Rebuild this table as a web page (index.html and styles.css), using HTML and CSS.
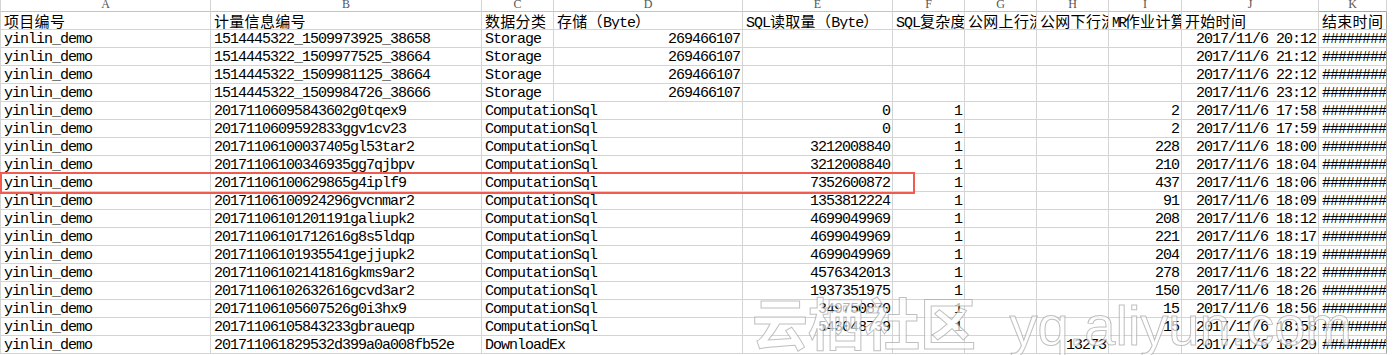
FILE: index.html
```html
<!DOCTYPE html>
<html lang="zh">
<head>
<meta charset="utf-8">
<title>计量数据</title>
<link rel="stylesheet" href="styles.css">
</head>
<body>
<div class="sheet">
  <div class="row letters">
    <div class="cell">A</div><div class="cell">B</div><div class="cell">C</div><div class="cell">D</div><div class="cell">E</div><div class="cell">F</div><div class="cell">G</div><div class="cell">H</div><div class="cell">I</div><div class="cell">J</div><div class="cell k">K</div>
  </div>
  <div class="row head">
    <div class="cell"><span class="zh">项目编号</span></div>
    <div class="cell"><span class="zh">计量信息编号</span></div>
    <div class="cell"><span class="zh">数据分类</span></div>
    <div class="cell"><span class="zh">存储（</span>Byte<span class="zh">）</span></div>
    <div class="cell">SQL<span class="zh">读取量（</span>Byte<span class="zh">）</span></div>
    <div class="cell">SQL<span class="zh">复杂度</span></div>
    <div class="cell"><span class="zh">公网上行流量</span></div>
    <div class="cell"><span class="zh">公网下行流量</span></div>
    <div class="cell"><span class="mr">MR</span><span class="zh">作业计算量</span></div>
    <div class="cell"><span class="zh">开始时间</span></div>
    <div class="cell k"><span class="zh">结束时间</span></div>
  </div>

  <div class="row"><div class="cell">yinlin_demo</div><div class="cell">1514445322_1509973925_38658</div><div class="cell">Storage</div><div class="cell n">269466107</div><div class="cell"></div><div class="cell"></div><div class="cell"></div><div class="cell"></div><div class="cell"></div><div class="cell n">2017/11/6 20:12</div><div class="cell k">########</div></div>
  <div class="row"><div class="cell">yinlin_demo</div><div class="cell">1514445322_1509977525_38664</div><div class="cell">Storage</div><div class="cell n">269466107</div><div class="cell"></div><div class="cell"></div><div class="cell"></div><div class="cell"></div><div class="cell"></div><div class="cell n">2017/11/6 21:12</div><div class="cell k">########</div></div>
  <div class="row"><div class="cell">yinlin_demo</div><div class="cell">1514445322_1509981125_38664</div><div class="cell">Storage</div><div class="cell n">269466107</div><div class="cell"></div><div class="cell"></div><div class="cell"></div><div class="cell"></div><div class="cell"></div><div class="cell n">2017/11/6 22:12</div><div class="cell k">########</div></div>
  <div class="row"><div class="cell">yinlin_demo</div><div class="cell">1514445322_1509984726_38666</div><div class="cell">Storage</div><div class="cell n">269466107</div><div class="cell"></div><div class="cell"></div><div class="cell"></div><div class="cell"></div><div class="cell"></div><div class="cell n">2017/11/6 23:12</div><div class="cell k">########</div></div>
  <div class="row"><div class="cell">yinlin_demo</div><div class="cell">20171106095843602g0tqex9</div><div class="cell wide">ComputationSql</div><div class="cell n">0</div><div class="cell n">1</div><div class="cell"></div><div class="cell"></div><div class="cell n">2</div><div class="cell n">2017/11/6 17:58</div><div class="cell k">########</div></div>
  <div class="row"><div class="cell">yinlin_demo</div><div class="cell">2017110609592833ggv1cv23</div><div class="cell wide">ComputationSql</div><div class="cell n">0</div><div class="cell n">1</div><div class="cell"></div><div class="cell"></div><div class="cell n">2</div><div class="cell n">2017/11/6 17:59</div><div class="cell k">########</div></div>
  <div class="row"><div class="cell">yinlin_demo</div><div class="cell">20171106100037405gl53tar2</div><div class="cell wide">ComputationSql</div><div class="cell n">3212008840</div><div class="cell n">1</div><div class="cell"></div><div class="cell"></div><div class="cell n">228</div><div class="cell n">2017/11/6 18:00</div><div class="cell k">########</div></div>
  <div class="row"><div class="cell">yinlin_demo</div><div class="cell">20171106100346935gg7qjbpv</div><div class="cell wide">ComputationSql</div><div class="cell n">3212008840</div><div class="cell n">1</div><div class="cell"></div><div class="cell"></div><div class="cell n">210</div><div class="cell n">2017/11/6 18:04</div><div class="cell k">########</div></div>
  <div class="row marked"><div class="cell">yinlin_demo</div><div class="cell">20171106100629865g4iplf9</div><div class="cell wide">ComputationSql</div><div class="cell n">7352600872</div><div class="cell n">1</div><div class="cell"></div><div class="cell"></div><div class="cell n">437</div><div class="cell n">2017/11/6 18:06</div><div class="cell k">########</div><span class="mark"></span></div>
  <div class="row"><div class="cell">yinlin_demo</div><div class="cell">20171106100924296gvcnmar2</div><div class="cell wide">ComputationSql</div><div class="cell n">1353812224</div><div class="cell n">1</div><div class="cell"></div><div class="cell"></div><div class="cell n">91</div><div class="cell n">2017/11/6 18:09</div><div class="cell k">########</div></div>
  <div class="row"><div class="cell">yinlin_demo</div><div class="cell">20171106101201191galiupk2</div><div class="cell wide">ComputationSql</div><div class="cell n">4699049969</div><div class="cell n">1</div><div class="cell"></div><div class="cell"></div><div class="cell n">208</div><div class="cell n">2017/11/6 18:12</div><div class="cell k">########</div></div>
  <div class="row"><div class="cell">yinlin_demo</div><div class="cell">20171106101712616g8s5ldqp</div><div class="cell wide">ComputationSql</div><div class="cell n">4699049969</div><div class="cell n">1</div><div class="cell"></div><div class="cell"></div><div class="cell n">221</div><div class="cell n">2017/11/6 18:17</div><div class="cell k">########</div></div>
  <div class="row"><div class="cell">yinlin_demo</div><div class="cell">20171106101935541gejjupk2</div><div class="cell wide">ComputationSql</div><div class="cell n">4699049969</div><div class="cell n">1</div><div class="cell"></div><div class="cell"></div><div class="cell n">204</div><div class="cell n">2017/11/6 18:19</div><div class="cell k">########</div></div>
  <div class="row"><div class="cell">yinlin_demo</div><div class="cell">20171106102141816gkms9ar2</div><div class="cell wide">ComputationSql</div><div class="cell n">4576342013</div><div class="cell n">1</div><div class="cell"></div><div class="cell"></div><div class="cell n">278</div><div class="cell n">2017/11/6 18:22</div><div class="cell k">########</div></div>
  <div class="row"><div class="cell">yinlin_demo</div><div class="cell">20171106102632616gcvd3ar2</div><div class="cell wide">ComputationSql</div><div class="cell n">1937351975</div><div class="cell n">1</div><div class="cell"></div><div class="cell"></div><div class="cell n">150</div><div class="cell n">2017/11/6 18:26</div><div class="cell k">########</div></div>
  <div class="row"><div class="cell">yinlin_demo</div><div class="cell">20171106105607526g0i3hx9</div><div class="cell wide">ComputationSql</div><div class="cell n">349750870</div><div class="cell n">1</div><div class="cell"></div><div class="cell"></div><div class="cell n">15</div><div class="cell n">2017/11/6 18:56</div><div class="cell k">########</div></div>
  <div class="row"><div class="cell">yinlin_demo</div><div class="cell">20171106105843233gbraueqp</div><div class="cell wide">ComputationSql</div><div class="cell n">543048739</div><div class="cell n">1</div><div class="cell"></div><div class="cell"></div><div class="cell n">15</div><div class="cell n">2017/11/6 18:58</div><div class="cell k">########</div></div>
  <div class="row"><div class="cell">yinlin_demo</div><div class="cell">201711061829532d399a0a008fb52e</div><div class="cell wide">DownloadEx</div><div class="cell"></div><div class="cell"></div><div class="cell"></div><div class="cell n">13273</div><div class="cell"></div><div class="cell n">2017/11/6 18:29</div><div class="cell k">########</div></div>
</div>
<div class="watermark"><span class="wm-zh">云栖社区</span> <span class="wm-en">yq.aliyun.com</span></div>
</body>
</html>
```

FILE: styles.css
```css
html, body {
  margin: 0;
  padding: 0;
  background: #ffffff;
}
body {
  position: relative;
  width: 1393px;
  height: 355px;
  overflow: hidden;
  font-family: "Liberation Mono", "Noto Sans CJK SC", monospace;
  font-size: 15px;
  letter-spacing: -1px;
  color: #000000;
}
.sheet {
  display: flex;
  flex-direction: column;
  width: 1387px;
}
.row {
  display: grid;
  grid-template-columns: 211px 271px 72px 189px 150px 72px 72px 72px 73px 137px 68px;
  height: 18px;
}
.cell {
  box-sizing: border-box;
  height: 18px;
  border-right: 1px solid #d4d4d4;
  border-bottom: 1px solid #d4d4d4;
  padding: 2px 3px 0 3px;
  line-height: 16px;
  white-space: nowrap;
  overflow: hidden;
}
.cell:first-child {
  border-left: 1px solid #d4d4d4;
}
.cell.wide {
  grid-column: span 2;
}
.cell.n {
  text-align: right;
  padding-right: 2px;
}
.cell.k {
  border-right-color: #a6a6a6;
}
.head .cell {
  padding-top: 1px;
}
.letters {
  height: 12px;
}
.letters .cell {
  height: 12px;
  padding: 0;
  line-height: 9px;
  text-align: center;
  font-family: "Liberation Serif", serif;
  font-size: 12px;
  letter-spacing: 0;
  color: #555555;
  border-bottom-color: #c4c4c4;
}
.letters .cell.k {
  border-right-color: #d4d4d4;
  border-bottom-color: #a6a6a6;
}
.zh {
  font-family: "Noto Sans CJK SC", sans-serif;
  font-size: 15px;
  letter-spacing: 0.3px;
  font-weight: 400;
}
.mr {
  letter-spacing: -2px;
  font-size: 14px;
}
.marked {
  position: relative;
}
.mark {
  position: absolute;
  left: 0;
  top: -2px;
  width: 915px;
  height: 22px;
  box-sizing: border-box;
  border: 2px solid #f25b4f;
  pointer-events: none;
}
.watermark {
  position: absolute;
  left: 752px;
  top: 293px;
  white-space: nowrap;
  font-size: 56px;
  line-height: 1;
  letter-spacing: 0;
  color: rgba(255, 255, 255, 0.7);
  -webkit-text-stroke: 1px rgba(150, 150, 150, 0.6);
  pointer-events: none;
}
.wm-zh {
  font-family: "Noto Sans CJK SC", sans-serif;
  font-weight: 700;
}
.wm-en {
  font-family: "Liberation Sans", sans-serif;
}
```
